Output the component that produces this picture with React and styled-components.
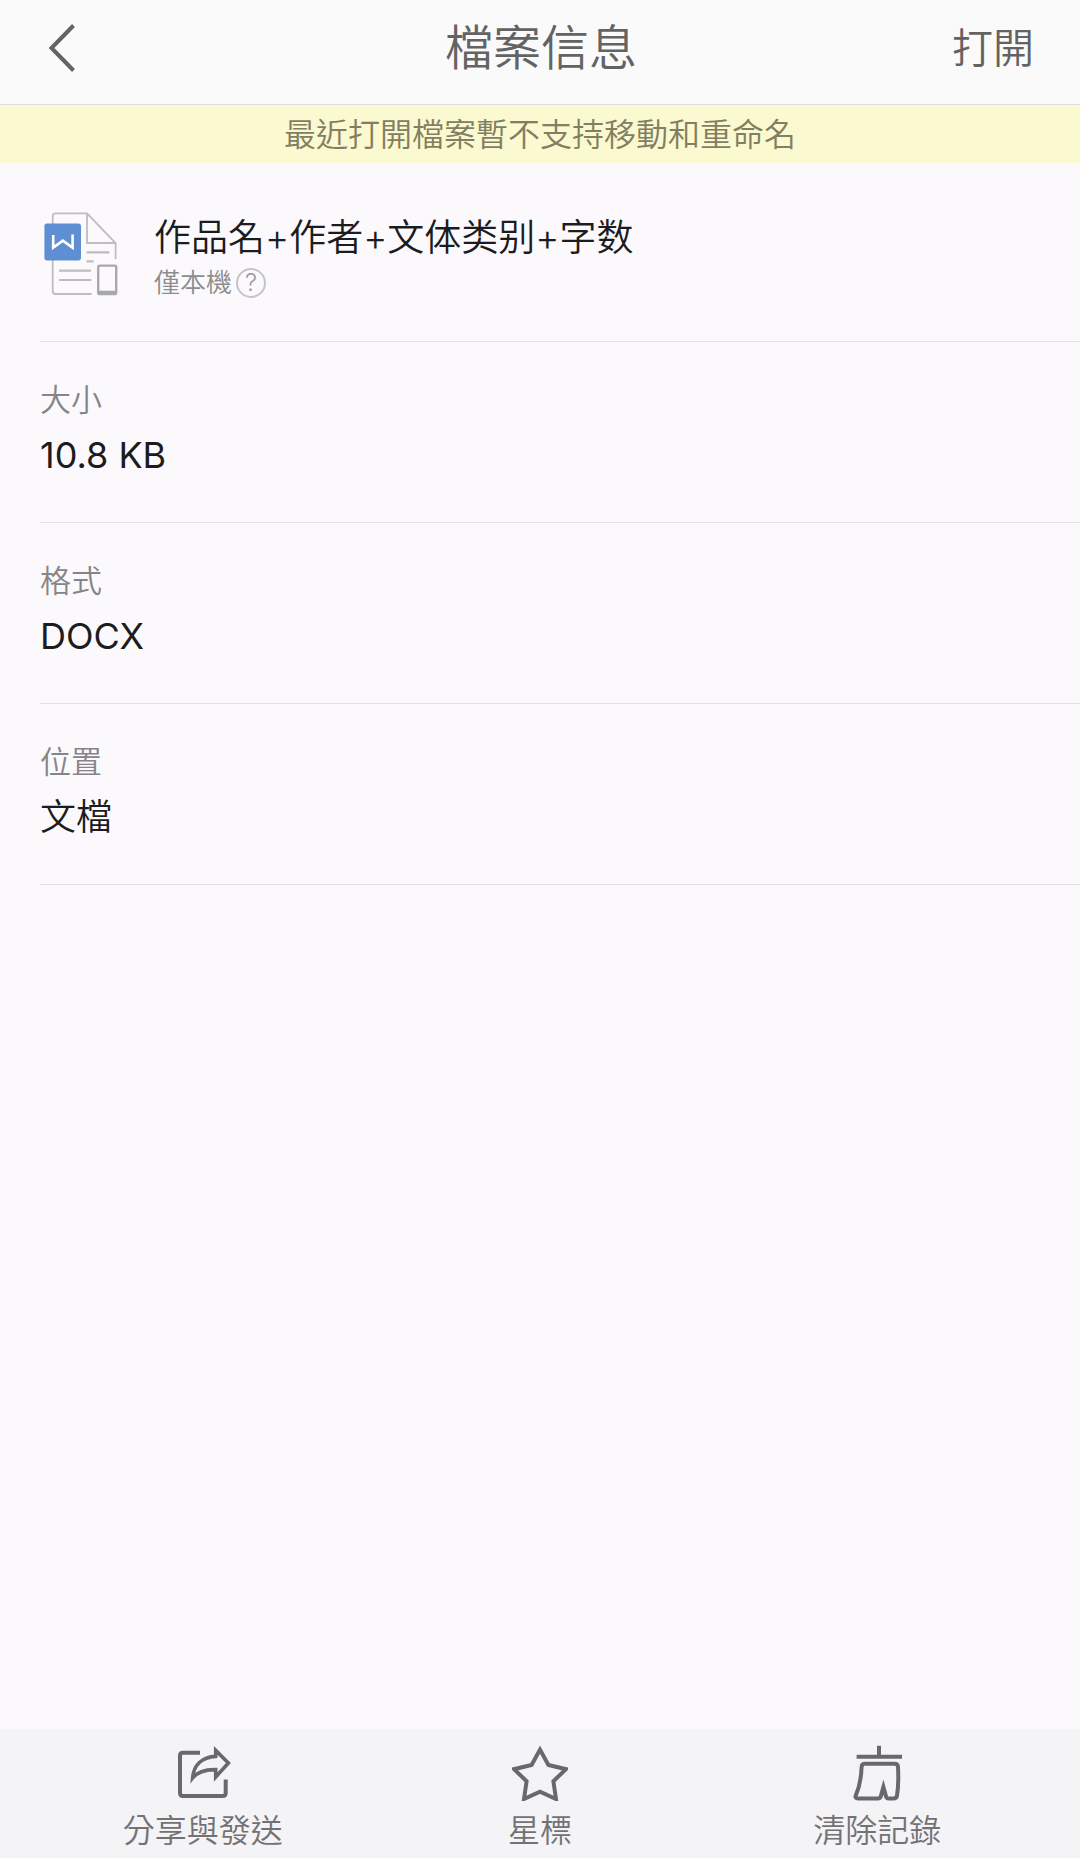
import React from 'react';
import styled, { createGlobalStyle } from 'styled-components';

const details = [
    { label: "大小", value: "10.8 KB", latin: true },
    { label: "格式", value: "DOCX", latin: true },
    { label: "位置", value: "文檔", latin: false },
];

const BackIcon = () => (
    <svg width="28" height="50" viewBox="0 0 28 50" fill="none" stroke="#636363" strokeWidth="4" aria-hidden="true">
        <path d="M25.5 2.5 L3.5 25 L25.5 47.5" />
    </svg>
);

const DocIcon = () => (
    <svg width="78" height="86" viewBox="-4 1 78 86" fill="none" stroke="#bdbdbd" strokeWidth="1.8" aria-hidden="true">
        <path d="M71.6 48 V32 L43 2.4 H11.5 Q8.7 2.4 8.7 5.2 V80 Q8.7 83 11.5 83 H47.7" />
        <path d="M43 2.4 V32 H71.6" />
        <path d="M42.6 41.4 H65.4 M42.6 50.4 H49.6 M15 59.6 H47 M15 69 H47.4" strokeWidth="2.2" />
        <rect x="0.4" y="12.6" width="36.6" height="36.8" rx="2.6" fill="#5f8fd3" stroke="none" />
        <path d="M9.2 24 V36.6 L18.8 29.6 L28.6 36.6 V23.6" stroke="#ffffff" strokeWidth="2.6" />
        <rect x="54.2" y="54.6" width="18" height="28.4" rx="1.6" stroke="#a9a9ab" strokeWidth="2.4" />
        <path d="M54.2 81.4 H72.2" stroke="#a9a9ab" strokeWidth="3.4" />
    </svg>
);

const ShareIcon = () => (
    <>
        <path d="M25 7.7 H8 Q5 7.7 5 10.7 V48 Q5 51 8 51 H47.7 Q50.7 51 50.7 48 V34.4" />
        <path d="M40.7 5.4 L53.4 18 L40.7 32 V24.6 C29 24.4 22.4 27 17.6 33 C18.6 20 27 12 40.7 11.4 Z" strokeWidth="3.6" />
    </>
);

const StarIcon = () => (
    <path d="M28 4.6 L36.4 20 L54 24.2 L41.4 36.2 L44 54 L28 46.8 L12 54 L14.6 36.2 L2 24.2 L19.6 20 Z" />
);

const BroomIcon = () => (
    <>
        <path d="M30 0.8 V11.6 M7.6 11.8 H53" />
        <path d="M16 18.8 H45.6 Q48.8 18.8 49 22 C49.6 33 49.4 42 48 50.6 Q47.6 53.4 44.6 53.4 H39.4 Q37.6 53.4 37 51.4 L34.4 42 L31.8 51.4 Q31.2 53.4 29 53.4 H9 Q5.6 53.4 6.8 50.4 C11 41 12.2 32 12.6 22 Q12.8 18.8 16 18.8 Z" />
    </>
);

const actions = [
    { label: "分享與發送", Icon: ShareIcon },
    { label: "星標", Icon: StarIcon },
    { label: "清除記錄", Icon: BroomIcon },
];

const App = () => {
    return (
        <React.Fragment>
            <GlobalStyle />
            <Page>
                <Header>
                    <BackButton type="button" aria-label="返回"><BackIcon /></BackButton>
                    <Title>檔案信息</Title>
                    <OpenButton type="button">打開</OpenButton>
                </Header>
                <Notice>最近打開檔案暫不支持移動和重命名</Notice>
                <Main>
                    <FileRow>
                        <DocIcon />
                        <FileText>
                            <FileName>作品名+作者+文体类别+字数</FileName>
                            <FilePlace>
                                僅本機
                                <HelpButton type="button">?</HelpButton>
                            </FilePlace>
                        </FileText>
                    </FileRow>
                    <Details>
                        { details.map(item => (
                            <DetailRow key={ item.label }>
                                <DetailLabel>{ item.label }</DetailLabel>
                                <DetailValue $latin={ item.latin }>{ item.value }</DetailValue>
                            </DetailRow>
                        )) }
                    </Details>
                </Main>
                <Toolbar>
                    { actions.map(({ label, Icon }) => (
                        <ToolButton type="button" key={ label }>
                            <svg width="56" height="56" viewBox="0 0 56 56" fill="none" stroke="#69696b" strokeWidth="4" aria-hidden="true">
                                <Icon />
                            </svg>
                            { label }
                        </ToolButton>
                    )) }
                </Toolbar>
            </Page>
        </React.Fragment>
    );
};

export default App;

const GlobalStyle = createGlobalStyle`
    *{
        box-sizing: border-box;
    }
    body{
        margin: 0;
        background: #fbf9fc;
        font-family: Inter, "Noto Sans CJK TC", "Noto Sans CJK SC", sans-serif;
        font-weight: 350;
    }
    button{
        padding: 0;
        border: 0;
        background: none;
        font-family: inherit;
        font-weight: inherit;
        cursor: pointer;
    }
`;
const Page = styled.div`
    display: flex;
    flex-direction: column;
    min-height: 100vh;
`;
const Header = styled.header`
    display: grid;
    grid-template-columns: 1fr auto 1fr;
    align-items: center;
    min-height: 105px;
    padding: 0 46px 8px 48px;
    background: #fafafa;
    border-bottom: 1px solid #dedede;
    color: #636363;
`;
const BackButton = styled.button`
    display: flex;
    justify-self: start;
`;
const Title = styled.h1`
    margin: 0;
    font-size: 48px;
    line-height: 64px;
    font-weight: inherit;
`;
const OpenButton = styled.button`
    justify-self: end;
    font-size: 41px;
    line-height: 64px;
    color: inherit;
`;
const Notice = styled.p`
    margin: 0;
    padding: 10px 16px 8px;
    background: #fbf9cf;
    color: #827e62;
    font-size: 32px;
    line-height: 40px;
    text-align: center;
`;
const Main = styled.main`
    flex: 1;
    padding-left: 40px;
`;
const FileRow = styled.section`
    display: flex;
    align-items: center;
    gap: 36px;
    padding: 47px 0 42px;
    border-bottom: 1px solid #e2e1e4;
`;
const FileText = styled.div`
    display: grid;
    gap: 5px;
    padding-top: 4px;
`;
const FileName = styled.h2`
    margin: 0;
    color: #1c1c1e;
    font-size: 37px;
    line-height: 48px;
    font-weight: inherit;
`;
const FilePlace = styled.div`
    display: flex;
    align-items: center;
    gap: 4px;
    color: #8c8c8e;
    font-size: 26px;
    line-height: 32px;
`;
const HelpButton = styled.button`
    display: grid;
    place-items: center;
    width: 30px;
    height: 30px;
    border: 2px solid #c4c4c6;
    border-radius: 50%;
    color: #98989a;
    font-size: 24px;
    line-height: 24px;
`;
const Details = styled.dl`
    margin: 0;
`;
const DetailRow = styled.div`
    display: grid;
    gap: 11px;
    padding: 38px 0 43px;
    border-bottom: 1px solid #e2e1e4;
`;
const DetailLabel = styled.dt`
    color: #858587;
    font-size: 31px;
    line-height: 40px;
`;
const DetailValue = styled.dd`
    margin: 0;
    color: #1c1c1e;
    font-size: 36px;
    line-height: 48px;
    font-weight: ${props => props.$latin ? 400 : "inherit"};
`;
const Toolbar = styled.footer`
    display: grid;
    grid-template-columns: repeat(3, 1fr);
    padding: 16px 34px 7px;
    background: #f4f3f6;
`;
const ToolButton = styled.button`
    display: flex;
    flex-direction: column;
    align-items: center;
    gap: 10px;
    color: #727274;
    font-size: 32px;
    line-height: 40px;
`;
